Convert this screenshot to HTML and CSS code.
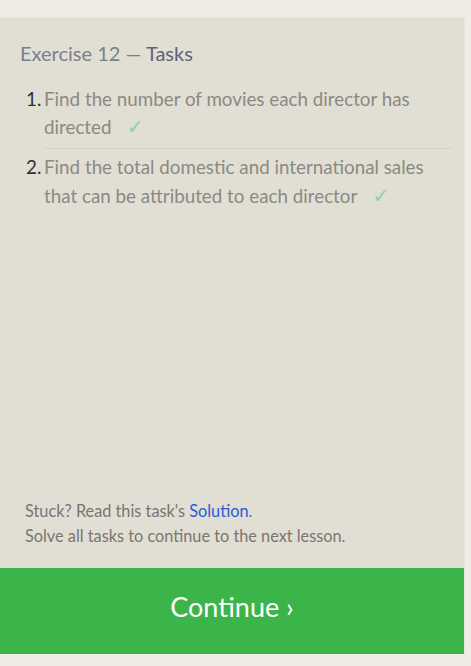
FILE: index.html
```html
<!DOCTYPE html>
<html>
<head>
<meta charset="utf-8">
<link rel="stylesheet" href="styles.css">
</head>
<body>
<div class="panel">
  <div class="content">
    <h2 class="title">Exercise 12 — <span class="strong">Tasks</span></h2>
    <ol class="tasks">
      <li class="task"><span class="num">1.</span><span class="text">Find the number of movies each director has directed<span class="check">✓</span></span></li>
      <li class="task"><span class="num">2.</span><span class="text">Find the total domestic and international sales that can be attributed to each director<span class="check">✓</span></span></li>
    </ol>
    <div class="spacer"></div>
    <p class="note">Stuck? Read this task's <a class="link" href="#">Solution</a>.<br>Solve all tasks to continue to the next lesson.</p>
  </div>
  <button class="continue">Continue ›</button>
</div>
</body>
</html>
```
FILE: styles.css
```css
html, body { margin: 0; padding: 0; }
body {
  background: #efece5;
  font-family: Lato, "Open Sans", sans-serif;
  width: 471px;
  height: 666px;
  overflow: hidden;
}
.panel {
  margin-top: 17px;
  width: 464px;
  height: 636px;
  background: #e1dfd4;
  border-top: 1px solid #e7e5dc;
  border-right: 1px solid #e7e5dc;
  display: flex;
  flex-direction: column;
}
.content {
  flex: 1;
  display: flex;
  flex-direction: column;
  padding: 21px 11px 0 20px;
}
.title {
  margin: 0;
  font-size: 20px;
  font-weight: 400;
  color: #7b7f8b;
  line-height: 28px;
}
.strong { color: #5d6478; }
.tasks {
  list-style: none;
  margin: 18px 0 0 0;
  padding: 0;
}
.task {
  display: flex;
  font-size: 18.8px;
  line-height: 28px;
  color: #8b8982;
  padding-left: 6px;
}
.num { color: #2f2f33; width: 17px; flex: none; }
.text { flex: 1; padding: 0 0 7px 1px; }
.task + .task .text { border-top: 1px solid #d5d3c9; padding-top: 3px; line-height: 29px; }
.task + .task .num { padding-top: 4px; line-height: 29px; }
.check {
  display: inline-block;
  line-height: 1;
  color: #8ed49b;
  margin-left: 15px;
  font-size: 21px;
  font-family: "DejaVu Sans", sans-serif;
}
.spacer { flex: 1; }
.note {
  margin: 0 0 20px 5px;
  font-size: 16.3px;
  line-height: 25px;
  color: #7c7470;
}
.link { color: #2e59d6; text-decoration: none; }
.continue {
  height: 86px;
  border: 0;
  background: #3bb54a;
  color: #fff;
  font-family: Lato, "Open Sans", sans-serif;
  font-size: 27px;
  padding: 0 0 10px 0;
  margin: 0;
  width: 100%;
}
```
